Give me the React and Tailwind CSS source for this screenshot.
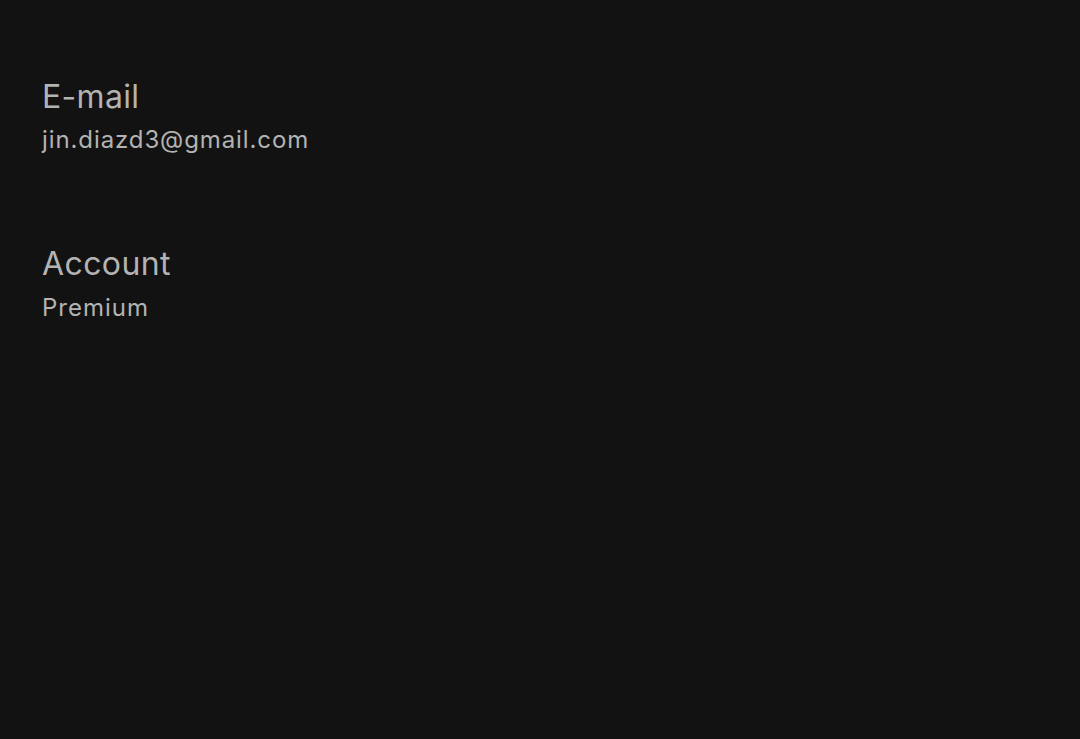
export default function App() {
  return (
    <div className="min-h-[739px] w-full bg-[#121212] text-[#b3b3b3] px-[42px] pt-[77px]" style={{ fontFamily: '"Inter", "Noto Sans", sans-serif' }}>
      <div className="flex flex-col gap-[88px]">
        <div>
          <div className="text-[32px] leading-[40px] tracking-[0.3px]">E-mail</div>
          <div className="text-[24px] leading-[32px] tracking-[0.9px] mt-[7px]">jin.diazd3@gmail.com</div>
        </div>
        <div>
          <div className="text-[32px] leading-[40px] tracking-[0.4px]">Account</div>
          <div className="text-[24px] leading-[32px] tracking-[1px] mt-[8px]">Premium</div>
        </div>
      </div>
    </div>
  );
}
